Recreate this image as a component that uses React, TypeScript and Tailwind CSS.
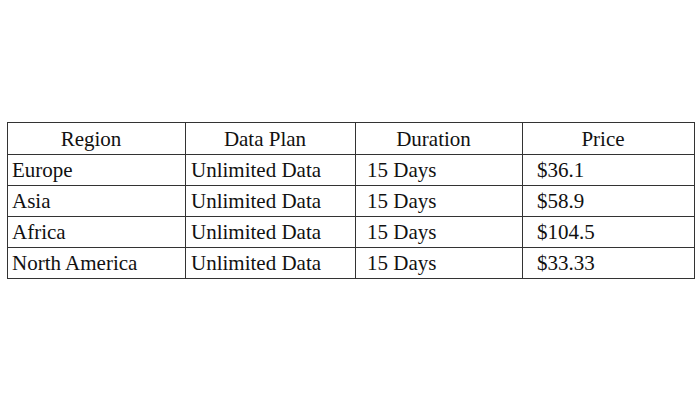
import React from 'react';

const rows = [
  { region: 'Europe', plan: 'Unlimited Data', duration: '15 Days', price: '$36.1' },
  { region: 'Asia', plan: 'Unlimited Data', duration: '15 Days', price: '$58.9' },
  { region: 'Africa', plan: 'Unlimited Data', duration: '15 Days', price: '$104.5' },
  { region: 'North America', plan: 'Unlimited Data', duration: '15 Days', price: '$33.33' },
];

const App = () => {
  return (
    <div className="w-[700px] h-[400px] bg-white pt-[122px] pl-[7px] text-[#111]" style={{ fontFamily: '"Liberation Serif", "Times New Roman", serif' }}>
      <table className="border-collapse table-fixed w-[687px] text-[21px] leading-[24px]">
        <colgroup>
          <col className="w-[178px]" />
          <col className="w-[170px]" />
          <col className="w-[167px]" />
          <col className="w-[172px]" />
        </colgroup>
        <thead>
          <tr className="h-[32px]">
            <th className="border border-[#333] font-normal text-center py-0 pl-0 pr-[11px]">Region</th>
            <th className="border border-[#333] font-normal text-center py-0 pl-0 pr-[11px]">Data Plan</th>
            <th className="border border-[#333] font-normal text-center py-0 pl-0 pr-[11px]">Duration</th>
            <th className="border border-[#333] font-normal text-center py-0 pl-0 pr-[11px]">Price</th>
          </tr>
        </thead>
        <tbody>
          {rows.map((r) => (
            <tr key={r.region} className="h-[31px]">
              <td className="border border-[#333] py-0 pl-[4px] whitespace-nowrap">{r.region}</td>
              <td className="border border-[#333] py-0 pl-[5px] whitespace-nowrap">{r.plan}</td>
              <td className="border border-[#333] py-0 pl-[11px] whitespace-nowrap">{r.duration}</td>
              <td className="border border-[#333] py-0 pl-[14px] whitespace-nowrap">{r.price}</td>
            </tr>
          ))}
        </tbody>
      </table>
    </div>
  );
};

export default App;
